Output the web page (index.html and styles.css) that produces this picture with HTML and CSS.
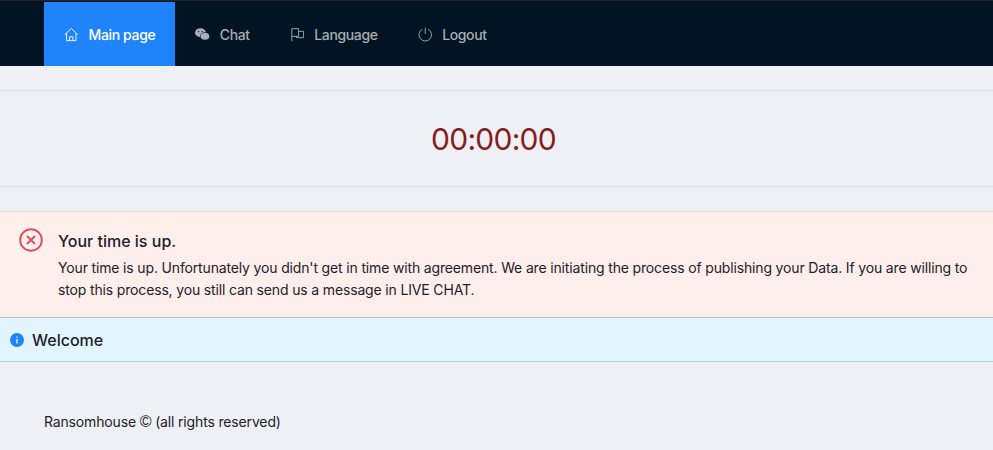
FILE: index.html
```html
<!DOCTYPE html>
<html lang="en">
<head>
<meta charset="utf-8">
<title>Ransomhouse</title>
<link rel="stylesheet" href="styles.css">
</head>
<body>
<header class="nav">
  <ul class="menu">
    <li class="item active">
      <svg class="ico" viewBox="0 0 16 16"><path d="M.8 8.300 8 1.300l7.200 7M2.800 6.800v8h10.400v-8M6.200 14.800v-4.300h3.600v4.300"/></svg>
      <span>Main page</span>
    </li>
    <li class="item">
      <svg class="ico ico-fill" viewBox="0 0 16 16"><ellipse cx="6" cy="6" rx="6" ry="4.800"/><circle class="cut" cx="4" cy="4.800" r=".8"/><circle class="cut" cx="8" cy="4.800" r=".8"/><ellipse class="cut" cx="11" cy="10" rx="5.400" ry="4.500"/><ellipse cx="11" cy="10" rx="4.800" ry="3.900"/></svg>
      <span>Chat</span>
    </li>
    <li class="item">
      <svg class="ico" viewBox="0 0 16 16"><path d="M2 15.500V1.500h7.500v8.500H2M9.500 4.500h5.500v7H7V10"/></svg>
      <span>Language</span>
    </li>
    <li class="item">
      <svg class="ico" viewBox="0 0 16 16"><path d="M8 .5v7M4.700 2.200a6.900 6.900 0 1 0 6.600 0"/></svg>
      <span>Logout</span>
    </li>
  </ul>
</header>
<main>
  <section class="timer">00:00:00</section>
  <section class="alert">
    <svg class="alert-ico" viewBox="0 0 24 24"><circle cx="12" cy="12" r="10.800"/><path d="m8 8 8 8m0-8-8 8"/></svg>
    <div class="alert-body">
      <h2 class="alert-title">Your time is up.</h2>
      <p class="alert-text">Your time is up. Unfortunately you didn't get in time with agreement. We are initiating the process of publishing your Data. If you are willing to stop this process, you still can send us a message in LIVE CHAT.</p>
    </div>
  </section>
  <section class="info">
    <svg class="info-ico" viewBox="0 0 14 14"><circle cx="7" cy="7" r="7"/><path class="i" d="M6.400 6h1.200v4.500H6.400zM6.400 3.500h1.200v1.300H6.400z"/></svg>
    <span>Welcome</span>
  </section>
</main>
<footer class="foot">Ransomhouse <span class="copy">©</span> (all rights reserved)</footer>
</body>
</html>
```
FILE: styles.css
```css
* { box-sizing: border-box; }
html, body { margin: 0; padding: 0; }
body {
  background: #eff0f5;
  color: #1c2129;
  font-family: Inter, "Liberation Sans", sans-serif;
  height: 450px;
  overflow: hidden;
}
.nav {
  height: 66px;
  background: #021423;
  border-top: 1px solid #20252b;
  padding: 1px 0 0 44px;
}
.menu {
  display: flex;
  list-style: none;
  margin: 0;
  padding: 0;
  height: 64px;
}
.item {
  display: flex;
  align-items: center;
  gap: 10px;
  padding: 0 20px;
  color: #a6adb4;
  font-size: 14px;
  font-weight: 500;
  letter-spacing: -0.36px;
}
.item.active {
  background: #1f84fc;
  color: #fff;
}
.ico {
  width: 14.500px;
  height: 15px;
  fill: none;
  stroke: currentColor;
  stroke-width: 1;
}
.ico-fill { fill: currentColor; stroke: none; }
.ico-fill .cut { fill: #021423; }
.timer {
  margin-top: 24px;
  height: 97px;
  padding-right: 6px;
  border-top: 1px solid #dfe0e5;
  border-bottom: 1px solid #dfe0e5;
  display: flex;
  align-items: center;
  justify-content: center;
  color: #871c1c;
  font-size: 30px;
  letter-spacing: -0.75px;
}
.alert {
  margin-top: 24px;
  height: 107px;
  display: flex;
  gap: 15px;
  padding: 16px 19px;
  background: #ffefec;
  border-top: 1px solid #f0d8d5;
  border-bottom: 1px solid #aec6d6;
}
.alert-ico {
  flex: none;
  width: 24px;
  height: 24px;
  fill: none;
  stroke: #d9545c;
  stroke-width: 2;
}
.alert-title {
  margin: 1px 0 4px;
  font-size: 16px;
  font-weight: 500;
  line-height: 24px;
}
.alert-text {
  margin: 0;
  font-size: 14px;
  line-height: 22px;
  letter-spacing: -0.155px;
}
.info {
  height: 44px;
  display: flex;
  align-items: center;
  gap: 8px;
  padding-left: 10px;
  background: #e2f5fe;
  border-bottom: 1px solid #9fd6ee;
  font-size: 16px;
  font-weight: 500;
}
.info-ico { width: 14px; height: 14px; fill: #1f84fc; }
.info-ico .i { fill: #fff; }
.foot {
  padding: 50px 44px 0;
  font-size: 14px;
  line-height: 20px;
  letter-spacing: -0.155px;
}
.copy { font-family: "Liberation Sans", sans-serif; font-size: 16px; }
```
